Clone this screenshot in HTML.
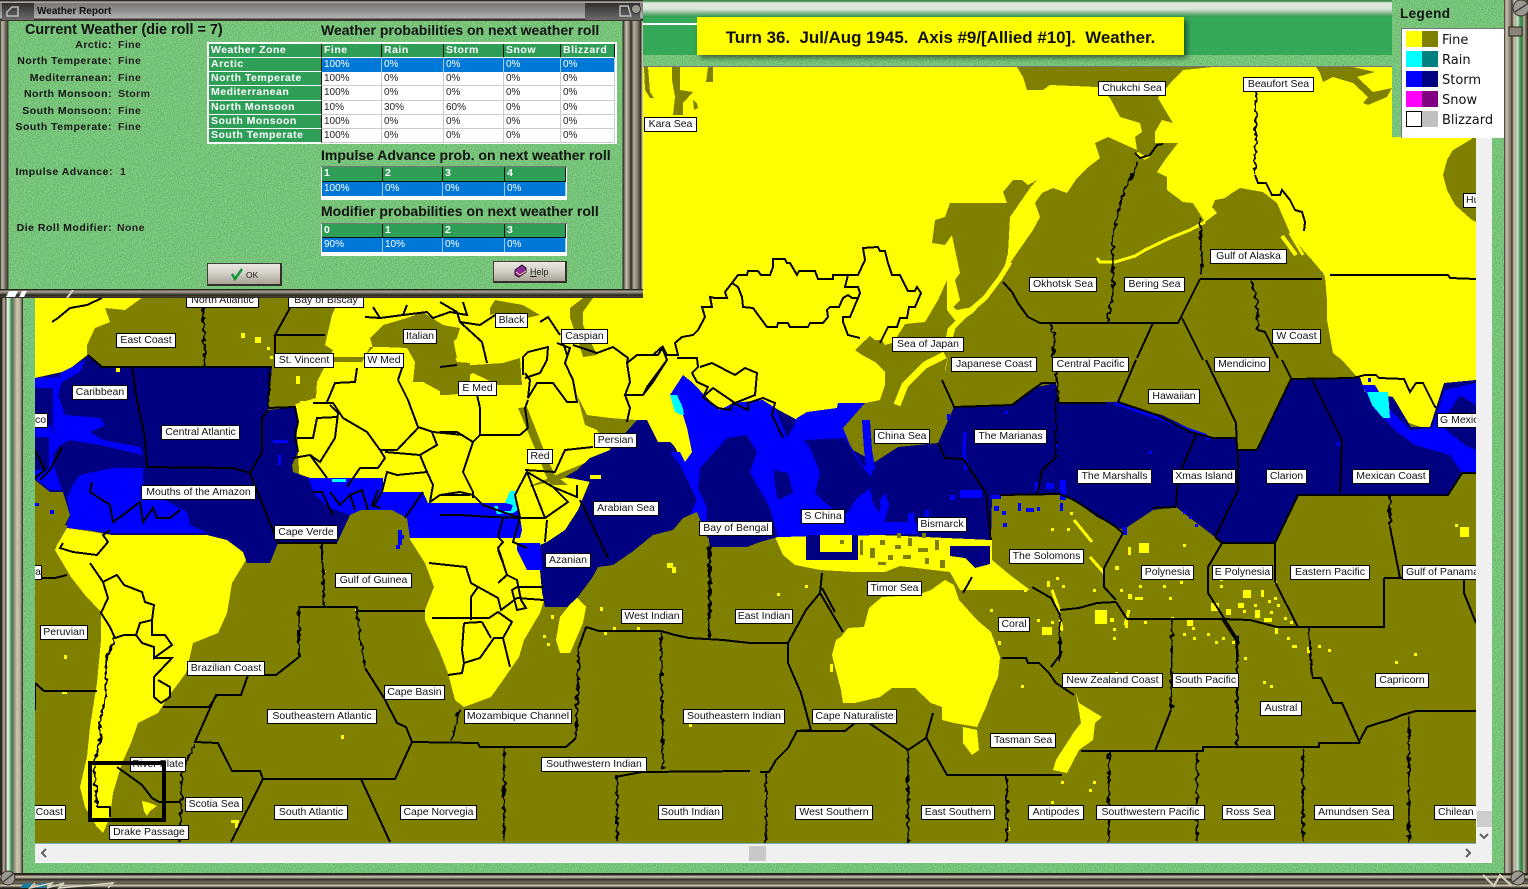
<!DOCTYPE html>
<html><head><meta charset="utf-8"><title>Weather Report</title>
<style>
html,body{margin:0;padding:0;width:1528px;height:889px;overflow:hidden;background:#82d084;font-family:"Liberation Sans",sans-serif}
#r{position:relative;width:1528px;height:889px;overflow:hidden;background:#82d084}
.a{position:absolute}
.l{position:absolute;height:15px;box-sizing:border-box;line-height:13px;background:#fff;border:1px solid #000;font-size:10.5px;text-align:center;overflow:hidden;white-space:nowrap;color:#111}
.t{position:absolute;white-space:nowrap;color:#141414;font-weight:bold}
.s{font-size:10.5px;letter-spacing:.5px;text-align:right;width:110px;left:2px}
.v{font-size:10.5px;letter-spacing:.4px;left:118px;color:#222}
.h{font-size:14px;color:#111}
.c{position:absolute;box-sizing:border-box;font-size:10px;line-height:13px;padding-left:2px;white-space:nowrap;color:#222;background:#fff;border-right:1px solid #ccc;border-bottom:1px solid #ccc}
.g{background:#2f9f57;color:#fff;font-weight:bold;font-size:10.5px;letter-spacing:.5px;border-right:1px solid #111;border-bottom:1px solid #fff}
.b{background:#0078d7;color:#fff;border-right:1px solid #9cc8ee;border-bottom:0}
.btn{position:absolute;box-sizing:border-box;background:linear-gradient(#ebe8e1,#d4d0c7 45%,#aaa497);border:1px solid #44413a;border-right:2px solid #332f2a;border-bottom:2px solid #332f2a;font-size:8.5px;color:#222}
</style></head><body><div id="r">

<svg class="a" style="left:0;top:0" width="1528" height="889"><defs><filter id="n" x="0" y="0" width="100%" height="100%" color-interpolation-filters="sRGB"><feTurbulence type="fractalNoise" baseFrequency=".85" numOctaves="2" seed="3"/><feColorMatrix values="0 0 0 0 .22  0 0 0 0 .5  0 0 0 0 .25  1 0 0 0 -.35"/></filter></defs><rect width="1528" height="889" filter="url(#n)"/></svg>

<!-- top strip -->
<div class="a" style="left:640px;top:0;width:760px;height:17px;background:linear-gradient(#3c8a4a 0,#3c8a4a 1px,#dfe9dd 3px,#dce7da 9px,#6fae7b 14px,#2f9a4d 17px)"></div>
<div class="a" style="left:640px;top:17px;width:760px;height:38px;background:#34aa58"></div>
<div class="a" style="left:640px;top:23px;width:60px;height:2px;background:#fff"></div>
<div class="a" style="left:640px;top:66px;width:760px;height:1px;background:#777"></div>

<!-- Map -->
<svg class="a" style="left:35px;top:67px" width="1441" height="776" viewBox="35 67 1441 776" shape-rendering="crispEdges">
<defs><filter id="j" filterUnits="userSpaceOnUse" x="35" y="67" width="1441" height="776" color-interpolation-filters="sRGB"><feTurbulence type="fractalNoise" baseFrequency=".22" numOctaves="1" seed="7" result="t"/><feDisplacementMap in="SourceGraphic" in2="t" scale="7" xChannelSelector="R" yChannelSelector="G"/></filter></defs>
<rect x="35" y="67" width="1441" height="776" fill="#808000"/>
<g fill="#ff0">
<polygon points="640,67 1476,67 1476,400 1430,430 1340,400 870,403 840,420 690,470 640,440 520,490 300,490 290,297"/>
<polygon points="300,470 530,470 530,510 300,510"/>
<polygon points="517,490 565,478 590,480 578,510 565,530 547,542 520,540"/>
<polygon points="35,297 143,297 125,310 105,308 110,322 95,328 87,345 87,355 72,367 62,372 35,378"/>
<!-- South America -->
<polygon points="57,545 67,528 112,535 207,535 227,540 243,552 246,560 232,583 227,613 218,633 193,643 186,673 168,697 158,713 138,723 131,743 122,763 113,793 110,817 103,833 97,827 85,807 80,787 87,757 90,727 97,683 101,640 101,612 85,595 71,577 55,550"/>
<!-- Africa south -->
<polygon points="409,538 550,538 552,540 545,560 544,600 540,613 524,640 519,657 503,680 491,697 464,707 455,700 448,673 439,650 425,620 425,610 434,587 425,563"/>
<!-- Madagascar -->
<polygon points="576,597 586,607 583,623 570,653 560,653 556,640 560,617"/>
<!-- Australia etc -->
<polygon points="841,637 848,628 864,627 869,608 882,597 917,595 931,590 945,580 954,585 959,600 977,620 991,632 1000,657 998,677 991,693 986,707 977,727 954,723 942,720 942,707 931,703 915,688 892,688 880,697 855,703 843,703 841,690 834,663 832,655 836,640"/>
<polygon points="963,727 977,730 979,750 972,755 963,743"/>
<polygon points="1076,692 1079,703 1102,717 1095,723 1093,740 1079,750 1067,773 1053,770 1056,760 1074,732 1081,723"/>
<!-- Indonesia -->
<polygon points="775,537 992,533 992,560 1010,575 1030,590 1000,590 985,590 960,590 950,572 900,566 885,572 855,572 820,570 795,565 783,555"/>
</g>

<g fill="#808000">
<!-- North Pacific -->
<polygon points="1017,67 1023,77 1027,90 1043,90 1050,85 1097,87 1110,98 1120,117 1140,123 1142,132 1135,137 1137,150 1108,137 1095,143 1100,158 1087,168 1077,178 1067,193 1053,188 1042,193 1035,203 1040,217 1033,230 1010,263 1003,273 993,290 973,313 957,323 950,347 945,373 952,410 1330,410 1358,378 1342,360 1333,353 1327,320 1327,300 1325,277 1323,273 1312,260 1303,250 1290,233 1277,203 1263,192 1240,188 1232,193 1225,198 1215,200 1212,207 1217,213 1205,222 1193,203 1183,202 1167,190 1167,177 1157,172 1165,160 1178,143 1155,143 1155,132 1162,120 1173,123 1158,98 1173,80 1183,70 1213,67"/>
<polygon points="950,203 1007,203 1003,192 1013,180 1022,180 1028,185 1037,180 1030,188 1017,207 1010,217 1008,253 1003,273 993,287 987,298 973,307 957,310 953,307 960,300 955,280 960,273 955,250 952,235 945,245 932,243 935,220 945,217"/>
<polygon points="1316,67 1353,67 1375,72 1357,77 1373,92 1392,88 1387,97 1368,105 1363,103 1368,97 1353,83 1333,77 1323,82 1320,73"/>
<polygon points="672,67 680,67 680,90 693,92 683,103 683,115 673,115 675,97 672,80"/>
<polygon points="708,67 713,67 713,82 706,82"/>
<polygon points="644,67 648,67 650,92 654,98 650,98 645,90"/>
<polygon points="693,100 697,103 698,108 694,110"/>
<!-- Alaska-ish top-right patch -->
<polygon points="1476,135 1470,140 1453,150 1447,160 1443,175 1447,190 1455,205 1472,220 1476,222"/>
<!-- China coast -->
<polygon points="947,280 938,300 925,322 905,324 895,340 892,343 885,345 882,340 875,340 870,336 860,345 855,350 862,355 875,362 885,372 885,385 880,400 865,403 855,415 843,428 850,445 863,467 873,458 890,450 915,440 945,415 954,405 945,370 950,347 950,330 957,323 947,310"/>
<!-- N Atlantic -->
<polygon points="143,297 367,297 340,297 332,315 325,345 333,350 317,382 316,398 293,405 272,410 270,367 100,367 88,355 87,345 95,328 110,322 105,308 125,310"/>
<!-- W Med -->
<polygon points="328,357 363,357 373,348 370,338 383,325 407,318 423,312 443,325 460,328 457,338 450,345 457,362 470,363 470,393 447,395 423,382 413,382 415,362 407,348 383,347 370,347 362,362 328,362"/>
<polygon points="440,368 473,365 503,363 520,358 522,385 498,385 473,373 457,382 447,395 440,395"/>
<polygon points="440,325 453,338 457,358 440,358"/>
<polygon points="490,308 495,300 523,305 540,315 527,318 497,313 490,315"/>
<polygon points="570,308 583,298 593,298 583,312 583,325 597,355 583,357 577,338 570,318"/>
<polygon points="518,408 527,407 547,458 555,475 568,485 550,485"/>
<polygon points="577,395 587,415 610,418 637,420 630,450 610,450 597,430 585,425"/>
<!-- Gulf of Guinea -->
<polygon points="350,515 363,512 378,510 392,508 407,518 410,540 425,563 434,587 425,610 425,640 300,640 246,560 278,543 337,543"/>
<!-- left ocean -->
<polygon points="35,478 50,492 63,492 70,515 65,523 60,532 57,545 55,550 71,577 85,595 35,620"/>
</g>

<g fill="none" stroke="#ff0">
<polyline stroke-width="3" points="1097,258 1100,262 1115,262 1135,256 1145,250 1170,238 1190,230 1205,222"/>
<polyline stroke-width="5" points="1010,262 1000,278 985,298 965,315 950,330 946,350"/>
<polyline stroke-width="7" points="945,355 925,365 905,385 897,405"/>
<polyline stroke-width="3" points="1290,233 1303,255"/>
<polyline stroke-width="4" points="1282,236 1296,255"/>
<polyline stroke-width="3" points="1137,153 1145,158 1150,155"/>
</g>

<!-- belt: navy -->
<polygon fill="#000080" points="35,378 62,372 72,367 88,355 100,367 272,367 268,410 295,407 298,422 295,435 298,452 292,465 293,472 310,478 350,478 350,515 337,543 278,543 270,563 247,563 243,552 227,540 207,535 112,535 65,525 70,515 63,492 50,492 35,480"/>
<polygon fill="#000080" points="540,570 540,545 547,542 565,530 578,510 590,482 565,477 577,470 590,458 610,450 637,420 647,420 658,442 672,442 685,465 707,470 727,438 747,435 775,408 875,462 898,447 938,443 954,407 1012,405 1037,387 1056,383 1058,403 1116,402 1134,408 1162,415 1199,433 1213,438 1236,438 1238,450 1257,450 1291,379 1360,377 1365,392 1393,397 1411,427 1430,427 1444,383 1476,380 1476,473 1462,473 1448,495 1298,495 1275,543 1222,543 1215,537 1176,507 1153,510 1123,530 1097,517 1074,500 1060,493 1000,495 992,497 991,540 880,535 778,537 760,542 747,547 710,547 707,528 703,513 697,512 683,518 673,530 653,535 632,552 613,565 598,567 592,578 577,598 567,607 545,607 542,592"/>

<!-- blue -->
<g fill="#00f">
<polygon points="308,478 383,478 383,492 423,492 428,503 518,503 522,530 520,538 410,538 407,518 392,510 361,510 350,515 330,508 315,495"/>
<polygon points="80,475 113,468 143,468 143,488 187,512 190,525 207,533 112,533 67,528 70,515 67,498 73,485"/>
<polygon points="35,378 60,377 62,372 72,367 85,360 80,372 62,382 58,395 65,415 100,418 105,425 90,432 103,440 140,447 143,455 100,445 70,440 60,445 53,455 55,470 62,490 50,490 35,478 35,425 50,425 55,435 50,415 45,395 35,388"/>
<polygon points="517,543 540,543 542,570 527,570 517,550"/>
<polygon points="683,375 693,383 707,398 720,410 733,403 763,400 775,408 787,438 793,428 797,418 807,412 837,408 838,403 865,403 843,428 850,445 863,467 873,458 872,500 882,520 882,535 778,537 707,537 697,512 690,515 697,500 680,465 670,452 692,452 687,428 683,415 670,395"/>
<rect x="882" y="522" width="36" height="12"/>
<polygon points="1362,385 1375,385 1390,410 1410,430 1432,428 1445,390 1476,383 1476,405 1460,395 1440,425 1465,445 1476,450 1476,473 1462,473 1450,455 1415,445 1395,430 1375,410"/>
<rect x="960" y="490" width="22" height="8"/><rect x="908" y="513" width="6" height="20"/><rect x="894" y="525" width="10" height="9"/>
<rect x="1035" y="482" width="4" height="10"/><rect x="1046" y="483" width="8" height="6"/><rect x="1060" y="480" width="6" height="20"/>
<rect x="991" y="495" width="10" height="4"/><rect x="994" y="506" width="5" height="5"/><rect x="1002" y="511" width="4" height="4"/><rect x="1018" y="503" width="3" height="8"/><rect x="1026" y="508" width="8" height="4"/><rect x="1037" y="507" width="3" height="4"/><rect x="1060" y="503" width="3" height="8"/><rect x="1003" y="523" width="4" height="4"/>
<rect x="1183" y="511" width="3" height="3"/><rect x="1189" y="516" width="3" height="3"/><rect x="1195" y="524" width="3" height="3"/><rect x="1123" y="527" width="4" height="8"/>
<rect x="1005" y="411" width="3" height="3"/><rect x="947" y="414" width="3" height="6"/><rect x="1055" y="443" width="3" height="4"/><rect x="1149" y="451" width="3" height="3"/>
<rect x="1368" y="378" width="3" height="4"/><rect x="1337" y="442" width="3" height="4"/><rect x="1388" y="495" width="3" height="3"/>
<rect x="950" y="495" width="5" height="5"/><rect x="925" y="510" width="4" height="8"/>
<rect x="273" y="440" width="15" height="3"/><rect x="278" y="455" width="3" height="10"/>
<rect x="398" y="530" width="4" height="15"/><rect x="396" y="545" width="4" height="4"/><rect x="400" y="535" width="4" height="4"/>
<rect x="35" y="503" width="4" height="3"/><rect x="50" y="510" width="4" height="4"/>
</g>
<g fill="none" stroke="#00f">
<polyline stroke-width="8" points="866,420 868,450 872,475 880,490 885,505 880,522"/>
<polyline stroke-width="3" points="965,432 964,450 966,470"/>
<polyline stroke-width="3" points="1115,403 1135,410 1165,420 1190,430 1205,435 1210,440"/>
<polyline stroke-width="3" points="753,470 748,490 760,510 775,525"/>
</g>
<!-- navy pockets -->
<g fill="#000080">
<polygon points="727,438 747,435 757,452 750,472 770,508 778,537 707,537 707,512 707,508 698,488 700,468"/>
<polygon points="804,440 845,438 859,463 871,477 871,487 855,500 848,513 838,513 822,500 815,493 820,473 811,450"/>
<polygon points="774,470 788,473 793,493 778,500 775,485"/>
<polygon points="872,470 885,470 895,480 880,500 870,492"/>
<polygon points="806,535 858,535 858,560 806,560"/>
<polygon points="950,546 990,546 990,564 975,568 965,558 950,556"/>
<rect x="35" y="388" width="18" height="35"/><rect x="35" y="437" width="14" height="33"/>
<polygon points="60,445 100,447 143,455 143,468 113,468 80,475 58,472"/>
<polygon points="72,385 100,392 125,412 100,415 75,410"/>
</g>
<rect x="820" y="535" width="32" height="17" fill="#ff0"/>
<polygon fill="#ff0" points="670,395 683,415 687,428 692,452 685,462 680,452 670,442 658,442 647,420 640,400"/>
<g fill="#808000">
<rect x="840" y="540" width="4" height="4"/><rect x="880" y="540" width="5" height="5"/><rect x="895" y="545" width="6" height="4"/><rect x="908" y="538" width="4" height="8"/><rect x="918" y="548" width="10" height="4"/><rect x="888" y="555" width="5" height="5"/><rect x="903" y="555" width="8" height="4"/><rect x="925" y="558" width="4" height="6"/><rect x="935" y="540" width="4" height="10"/><rect x="870" y="548" width="5" height="10"/><rect x="878" y="562" width="8" height="3"/><rect x="940" y="560" width="5" height="8"/><rect x="860" y="540" width="3" height="15"/>
<rect x="897" y="533" width="4" height="5"/><rect x="922" y="533" width="4" height="5"/>
</g>
<!-- cyan -->
<g fill="#0ff">
<rect x="332" y="479" width="14" height="3"/>
<polygon points="670,395 677,395 683,408 684,415 681,415 675,412"/>
<polygon points="1367,392 1388,392 1390,418 1383,418 1372,405"/>
<polygon points="510,491 516,491 518,510 513,513 497,514 494,506 498,506 498,511 511,511 513,505 505,503"/>
</g>
<rect x="590" y="475" width="11" height="4" fill="#ff0"/>

<!-- Yellow dots -->
<path fill="#ff0" d="M777 593h3v3h-3zM805 585h3v3h-3zM990 609h3v3h-3zM998 641h3v4h-3zM1021 685h3v3h-3zM830 664h3v8h-3zM1115 672h3v2h-3zM1093 781h3v3h-3zM1089 789h3v3h-3zM1051 801h3v3h-3zM1061 781h3v3h-3zM1007 827h3v4h-3zM1244 657h3v3h-3zM1263 681h3v3h-3zM1270 685h3v3h-3zM1414 653h3v3h-3zM1395 661h3v3h-3zM1328 649h3v3h-3zM1318 645h3v3h-3zM1292 645h5v3h-5zM1307 647h3v6h-3zM1287 637h3v3h-3zM1275 628h3v6h-3zM1113 628h3v3h-3zM1113 637h3v3h-3zM1093 589h3v3h-3zM1056 577h3v3h-3zM1062 585h3v3h-3zM1047 581h3v6h-3zM1024 589h3v3h-3zM1000 581h3v3h-3zM1128 594h4v5h-4zM1135 597h8v3h-8zM1169 597h3v3h-3zM1120 589h3v3h-3zM1139 585h3v3h-3zM1163 585h3v3h-3zM1180 581h3v3h-3zM1220 585h3v3h-3zM1274 581h3v3h-3zM1144 621h3v3h-3zM1171 617h3v3h-3zM1183 633h3v3h-3zM1193 637h3v3h-3zM1207 633h3v3h-3zM1215 641h3v3h-3zM1222 637h3v3h-3zM1232 641h3v3h-3zM1187 618h6v8h-6zM1192 627h3v3h-3zM1211 603h8v8h-8zM1226 609h5v6h-5zM1238 603h6v5h-6zM1243 590h8v8h-8zM1261 590h3v7h-3zM1268 600h3v3h-3zM1255 610h5v8h-5zM1264 618h8v4h-8zM1270 611h3v3h-3zM1284 617h3v3h-3zM1290 621h3v3h-3zM1274 597h3v3h-3zM1277 604h3v3h-3zM1254 604h3v3h-3zM1243 610h3v3h-3zM1095 610h12v14h-12zM1110 618h4v4h-4zM1125 618h3v10h-3zM1042 627h10v8h-10zM1060 625h3v6h-3zM1051 621h3v3h-3zM1037 619h3v3h-3zM1460 527h9v10h-9zM1455 524h3v3h-3zM1051 528h3v3h-3zM1067 528h3v3h-3zM1070 512h3v3h-3zM1183 544h3v3h-3zM1139 543h10v10h-10zM1128 547h3v8h-3zM1115 566h4v4h-4zM241 333h4v5h-4zM255 337h6v6h-6zM267 347h3v3h-3zM270 356h3v3h-3zM116 367h4v5h-4zM296 376h4v8h-4zM300 401h6v4h-6zM64 655h3v4h-3zM62 691h5v3h-5zM323 571h3v3h-3zM341 735h3v4h-3zM231 820h8v3h-8zM235 823h3v5h-3zM667 563h6v5h-6zM672 567h4v6h-4zM600 607h3v4h-3zM551 615h3v4h-3zM543 635h3v3h-3zM547 643h3v3h-3zM604 631h3v4h-3zM613 627h3v3h-3zM637 627h3v4h-3zM689 724h3v3h-3zM355 607h3v4h-3zM1220 578h3v3h-3z"/>
<polygon fill="#ff0" points="142,801 150,803 157,806 150,811 147,816 144,811"/>
<g fill="none" stroke="#ff0" stroke-width="3"><polyline points="1074,520 1092,542"/><polyline points="1090,557 1104,573"/><polyline points="1052,590 1060,612"/><polyline points="1060,620 1062,630"/><polyline points="1129,610 1125,625"/></g>

<!-- Jagged borders -->
<g fill="none" stroke="#000" stroke-width="2" filter="url(#j)">
<polyline points="1256,92 1255,175"/>
<polyline points="1138,162 1122,197 1118,213 1112,240 1113,267 1113,293 1107,322"/>
<polyline points="1200,218 1202,273"/>
<polyline points="1050,323 1055,340 1053,357"/>
<polyline points="1251,280 1257,300 1258,330"/>
<polyline points="1056,360 1058,403"/>
<polyline points="1056,403 1056,457"/>
<polyline points="1390,495 1390,527"/>
<polyline points="1060,615 1060,660"/>
<polyline points="908,750 908,842"/>
<polyline points="1007,775 1007,842"/>
<polyline points="1109,752 1109,842"/>
<polyline points="1197,752 1197,842"/>
<polyline points="1303,748 1303,842"/>
<polyline points="1409,715 1409,842"/>
<polyline points="766,772 766,842"/>
<polyline points="1171,710 1172,620"/>
<polyline points="1237,637 1237,747"/>
<polyline points="1309,627 1312,678"/>
<polyline points="324,607 322,543"/>
<polyline points="299,607 299,657"/>
<polyline points="195,743 182,773 180,842"/>
<polyline points="504,747 504,842"/>
<polyline points="617,775 617,842"/>
<polyline points="663,770 661,633"/>
<polyline points="709,638 709,547"/>
<polyline points="710,545 710,615"/>
<polyline points="203,298 205,367"/>
<polyline points="270,367 268,408"/>
<polyline points="356,607 365,668"/>
<polyline points="459,710 452,742"/>
<polyline points="579,647 576,738"/>
<polyline points="115,638 106,660 106,697 99,723 101,735 94,763 97,807"/>
</g>
<!-- Borders -->
<g fill="none" stroke="#000" stroke-width="2" stroke-linejoin="miter">
<polyline points="1255,175 1258,183 1266,183 1272,195 1280,195 1282,190 1290,200 1295,210 1302,212 1305,222 1304,231"/>
<polyline points="1330,275 1448,275 1450,278 1476,279"/>
<polyline points="1135,153 1140,158 1150,155 1157,145 1163,144"/>
<polyline points="1200,279 1322,279"/>
<polyline points="1200,279 1178,323 1040,323 1028,317 1018,303 1012,292 1003,282"/>
<polyline points="1153,323 1137,358"/>
<polyline points="1182,318 1203,360"/>
<polyline points="1258,330 1265,332 1278,358"/>
<polyline points="942,380 952,402 954,407 1012,405 1028,393 1042,383 1056,383"/>
<polyline points="1058,403 1106,403"/>
<polyline points="1136,360 1118,402 1157,415 1190,432 1213,438 1236,438"/>
<polyline points="1206,360 1236,423 1237,450 1257,450 1291,379 1353,378 1365,375 1376,375 1379,378 1404,379 1410,392 1416,383 1423,383 1434,405 1436,408"/>
<polyline points="1282,360 1291,378"/>
<polyline points="1312,380 1342,440 1340,493"/>
<polyline points="1238,450 1238,490 1215,537"/>
<polyline points="1196,435 1178,477 1176,507"/>
<polyline points="1056,457 1042,470 1037,495"/>
<polyline points="938,443 945,458 963,459 986,493 991,540"/>
<polyline points="1000,495 1060,494 1074,500 1116,527 1123,533 1104,568 1104,587 1116,600"/>
<polyline points="1153,508 1176,507"/>
<polyline points="1215,537 1222,543 1275,543 1298,495 1448,495 1462,473 1476,473"/>
<polyline points="1222,543 1208,567 1208,593 1224,618 1236,637 1238,657"/>
<polyline points="1275,543 1275,582 1298,627"/>
<polyline points="1390,527 1400,578"/>
<polyline points="1384,578 1476,578"/>
<polyline points="1384,578 1384,627 1277,627"/>
<polyline points="1464,580 1464,593 1476,623"/>
<polyline points="1116,602 1127,619 1222,619 1250,620 1277,627"/>
<polyline points="1060,610 1079,608 1097,603 1116,602"/>
<polyline points="1032,587 1051,598 1060,615"/>
<polyline points="972,577 963,593"/>
<polyline points="822,573 820,593 806,610 788,643 760,643"/>
<polyline points="820,593 843,632"/>
<polyline points="788,643 788,663 801,693 811,730 797,731 788,748 776,760 769,772 760,772"/>
<polyline points="797,731 845,731 855,723 869,723 894,740 908,750 926,738 933,713"/>
<polyline points="926,737 947,775 1062,775"/>
<polyline points="1002,658 1026,658 1028,663 1039,663 1049,673 1056,683 1074,695"/>
<polyline points="1060,637 1060,655 1051,667"/>
<polyline points="1081,751 1203,751 1203,747 1319,747 1319,743 1360,743"/>
<polyline points="1155,751 1171,710"/>
<polyline points="1360,743 1342,703 1333,703 1321,678 1312,678"/>
<polyline points="1360,740 1367,727 1379,723 1390,720 1402,715 1416,711 1476,711"/>
<polyline points="1222,619 1236,640"/>
<polyline points="35,578 55,578 67,575"/>
<polyline points="35,683 44,691 97,691"/>
<polyline points="35,683 35,710"/>
<polyline points="299,607 356,607 358,611 425,611"/>
<polyline points="299,657 276,675 248,675 241,695 216,695 195,742 218,743 232,771 260,771 263,779 395,779 412,742 478,743 480,747 566,747 576,738"/>
<polyline points="579,647 586,627"/>
<polyline points="217,695 209,707 163,707"/>
<polyline points="365,668 384,698 397,723 406,727 412,742"/>
<polyline points="263,779 231,842"/>
<polyline points="361,779 390,842"/>
<polyline points="615,777 642,772 750,771"/>
<polyline points="159,802 180,802"/>
<polyline points="580,500 608,558"/>
<polyline points="822,588 835,612"/>
<polyline points="586,627 599,631 661,631 675,635 689,638 723,640 750,643 760,643"/>
<polyline points="88,355 102,367 272,367"/>
<polyline points="290,308 275,335 325,335"/>
<polyline points="275,335 275,358"/>
<polyline points="268,408 295,407 298,422 295,435 298,452"/>
<polyline points="132,368 137,400 145,438 147,467 233,468 250,473 262,452 262,418 268,410"/>
<polyline points="250,473 278,543 337,543"/>
<polyline points="322,543 322,560"/>
<polyline points="52,322 58,318 70,308 87,305 102,298"/>
<polyline points="398,380 408,400 418,427 433,432 463,435"/>
<polyline points="398,380 403,365"/>
<polyline points="313,403 333,403 343,418 367,432 380,450 397,450 418,428"/>
<polyline points="330,405 338,413 335,438 320,462 310,455 293,458"/>
<polyline points="297,438 313,438 317,418 337,417"/>
<polyline points="310,455 327,478"/>
<polyline points="380,450 385,458 378,468 360,468 347,487"/>
<polyline points="385,452 420,455 437,445 432,432"/>
<polyline points="420,455 427,472 397,475 387,472 382,492 373,507"/>
<polyline points="427,472 433,485 430,502 440,495 470,495"/>
<polyline points="405,518 423,492"/>
<polyline points="313,492 322,492 333,515"/>
<polyline points="330,492 340,505 350,495 355,510"/>
<polyline points="350,495 362,490 368,510"/>
<polyline points="378,490 372,505 380,508"/>
<polyline points="357,368 355,382 335,383 327,402"/>
<polyline points="440,367 457,365"/>
<polyline points="365,317 380,318 373,307"/>
<polyline points="380,318 403,315 407,305"/>
<polyline points="403,315 427,312 433,318 450,312 467,315 463,302"/>
<polyline points="440,302 457,312 460,322 480,325 495,315"/>
<polyline points="460,322 482,342 487,363"/>
<polyline points="477,395 480,408 480,435 473,442 463,472 473,492 473,498"/>
<polyline points="440,432 457,432 473,442"/>
<polyline points="480,435 520,435 528,428"/>
<polyline points="528,400 525,408 528,428"/>
<polyline points="525,373 530,380 528,398 537,383 553,383 567,402 577,402 573,380 565,363 570,348 557,343"/>
<polyline points="523,375 523,357 528,352 548,347 547,360 540,373 525,378"/>
<polyline points="560,335 548,317 540,322"/>
<polyline points="563,342 567,355"/>
<polyline points="573,345 597,353 613,347 628,358 627,363 630,382 625,395 643,395 653,382 667,360 662,347 653,355 637,355 627,363"/>
<polyline points="625,395 630,408 627,422"/>
<polyline points="677,358 697,358 698,367 692,373 697,382 708,387 703,397 718,408 730,410 733,403 748,410 748,403 763,398 775,403 772,415 783,438"/>
<polyline points="667,360 647,387 643,395"/>
<polyline points="700,367 712,363 735,375 745,368 757,373 755,395 735,403 713,388 703,397"/>
<polyline points="640,355 658,355 663,347 667,355 678,355 675,343 682,337 693,335 698,330 705,317 702,307 712,307 710,297 715,298 727,298 725,292 732,283 738,287 742,297 743,307 753,308 767,327 777,327 778,323 788,323 790,327 808,327 810,323 823,323 828,317 827,310 830,307 839,307 843,298 848,295 852,298 858,298 860,293 858,287 845,287 848,275"/>
<polyline points="732,283 738,275 747,275 748,271 758,271 761,275 770,275 773,267 773,259 785,259 787,263 790,263 797,275 799,271 815,271 818,279 833,279 833,275 858,275 865,260 863,248 878,247 880,251 885,251 888,263 892,275 900,275 908,291 915,291 917,287 921,293 915,307 909,307 907,318 900,318 897,327 888,327 880,343"/>
<polyline points="858,298 850,317 843,317 843,322 848,335 860,338"/>
<polyline points="63,543 60,548 73,552 97,555 108,542 103,535 110,530"/>
<polyline points="92,482 90,492 110,505 113,522 123,515 140,502 143,522 153,508 157,518 170,518 180,510"/>
<polyline points="90,563 103,582 117,575 124,585 142,592 145,602 154,605 152,620 140,623 136,635 142,643 154,647 154,658 172,645 165,635 152,635 152,620"/>
<polyline points="103,582 108,598 101,613 110,627 115,638 124,635 136,635"/>
<polyline points="97,807 110,807 110,817"/>
<polyline points="154,658 172,658 154,677 154,697 161,703 170,697 170,687 158,680"/>
<polyline points="117,767 142,785 152,798 159,802"/>
<polyline points="432,618 489,618 498,612 512,622 503,638 494,638 480,658 464,663 462,673 448,675"/>
<polyline points="482,622 491,638"/>
<polyline points="464,623 482,622"/>
<polyline points="464,623 462,650 464,663"/>
<polyline points="503,638 510,667"/>
<polyline points="429,563 466,567 471,583 498,598 501,610 517,598 544,600"/>
<polyline points="498,583 507,575 517,580 521,600 526,608 517,610 512,590 517,587 544,587"/>
<polyline points="471,583 478,587 471,597 471,620"/>
<polyline points="498,550 503,563 507,575"/>
<polyline points="520,518 545,518 527,472 515,495 520,517"/>
<polyline points="545,518 568,502 553,487 527,472"/>
<polyline points="553,487 577,497 577,485"/>
<polyline points="525,470 555,472 565,450 593,447"/>
<polyline points="440,495 460,492 473,495 483,505 520,518"/>
<polyline points="440,515 460,515 493,517 520,518"/>
<polyline points="503,518 498,537 503,542 498,548 503,562"/>
<polyline points="520,518 513,542 527,548"/>
<polyline points="547,520 545,542"/>
<polyline points="35,450 45,470 35,478"/>
<polyline points="62,447 50,470 40,480"/>
</g>
</svg>

<!-- Labels -->
<div class="l" style="left:1098px;top:81px;width:68px">Chukchi Sea</div>
<div class="l" style="left:1243px;top:77px;width:71px">Beaufort Sea</div>
<div class="l" style="left:644px;top:117px;width:53px">Kara Sea</div>
<div class="l" style="left:1463px;top:193px;width:13px;border-right:0;text-align:left;padding-left:2px">Hu</div>
<div class="l" style="left:1210px;top:249px;width:77px">Gulf of Alaska</div>
<div class="l" style="left:1029px;top:277px;width:68px">Okhotsk Sea</div>
<div class="l" style="left:1124px;top:277px;width:61px">Bering Sea</div>
<div class="l" style="left:186px;top:293px;width:73px">North Atlantic</div>
<div class="l" style="left:288px;top:293px;width:76px">Bay of Biscay</div>
<div class="l" style="left:116px;top:333px;width:60px">East Coast</div>
<div class="l" style="left:495px;top:313px;width:33px">Black</div>
<div class="l" style="left:403px;top:329px;width:34px">Italian</div>
<div class="l" style="left:561px;top:329px;width:47px">Caspian</div>
<div class="l" style="left:892px;top:337px;width:72px">Sea of Japan</div>
<div class="l" style="left:1272px;top:329px;width:49px">W Coast</div>
<div class="l" style="left:951px;top:357px;width:86px">Japanese Coast</div>
<div class="l" style="left:1052px;top:357px;width:77px">Central Pacific</div>
<div class="l" style="left:1214px;top:357px;width:56px">Mendicino</div>
<div class="l" style="left:274px;top:353px;width:60px">St. Vincent</div>
<div class="l" style="left:364px;top:353px;width:40px">W Med</div>
<div class="l" style="left:72px;top:385px;width:56px">Caribbean</div>
<div class="l" style="left:458px;top:381px;width:39px">E Med</div>
<div class="l" style="left:1148px;top:389px;width:52px">Hawaiian</div>
<div class="l" style="left:161px;top:425px;width:79px">Central Atlantic</div>
<div class="l" style="left:35px;top:413px;width:13px;border-left:0;text-align:right;padding-right:2px">co</div>
<div class="l" style="left:594px;top:433px;width:43px">Persian</div>
<div class="l" style="left:874px;top:429px;width:56px">China Sea</div>
<div class="l" style="left:974px;top:429px;width:73px">The Marianas</div>
<div class="l" style="left:1437px;top:413px;width:39px;border-right:0;text-align:left;padding-left:2px">G Mexico</div>
<div class="l" style="left:527px;top:449px;width:26px">Red</div>
<div class="l" style="left:141px;top:485px;width:115px">Mouths of the Amazon</div>
<div class="l" style="left:1077px;top:469px;width:75px">The Marshalls</div>
<div class="l" style="left:1172px;top:469px;width:64px">Xmas Island</div>
<div class="l" style="left:1266px;top:469px;width:41px">Clarion</div>
<div class="l" style="left:1352px;top:469px;width:78px">Mexican Coast</div>
<div class="l" style="left:593px;top:501px;width:66px">Arabian Sea</div>
<div class="l" style="left:801px;top:509px;width:44px">S China</div>
<div class="l" style="left:917px;top:517px;width:50px">Bismarck</div>
<div class="l" style="left:699px;top:521px;width:74px">Bay of Bengal</div>
<div class="l" style="left:274px;top:525px;width:64px">Cape Verde</div>
<div class="l" style="left:545px;top:553px;width:46px">Azanian</div>
<div class="l" style="left:1009px;top:549px;width:75px">The Solomons</div>
<div class="l" style="left:35px;top:565px;width:7px;border-left:0;text-align:right">a</div>
<div class="l" style="left:1141px;top:565px;width:53px">Polynesia</div>
<div class="l" style="left:1212px;top:565px;width:61px">E Polynesia</div>
<div class="l" style="left:1290px;top:565px;width:80px">Eastern Pacific</div>
<div class="l" style="left:1402px;top:565px;width:74px;border-right:0;text-align:left;padding-left:3px">Gulf of Panama</div>
<div class="l" style="left:335px;top:573px;width:77px">Gulf of Guinea</div>
<div class="l" style="left:867px;top:581px;width:55px">Timor Sea</div>
<div class="l" style="left:621px;top:609px;width:62px">West Indian</div>
<div class="l" style="left:735px;top:609px;width:58px">East Indian</div>
<div class="l" style="left:998px;top:617px;width:32px">Coral</div>
<div class="l" style="left:40px;top:625px;width:48px">Peruvian</div>
<div class="l" style="left:187px;top:661px;width:78px">Brazilian Coast</div>
<div class="l" style="left:1062px;top:673px;width:101px">New Zealand Coast</div>
<div class="l" style="left:1172px;top:673px;width:67px">South Pacific</div>
<div class="l" style="left:1375px;top:673px;width:54px">Capricorn</div>
<div class="l" style="left:384px;top:685px;width:61px">Cape Basin</div>
<div class="l" style="left:1260px;top:701px;width:42px">Austral</div>
<div class="l" style="left:267px;top:709px;width:110px">Southeastern Atlantic</div>
<div class="l" style="left:464px;top:709px;width:108px">Mozambique Channel</div>
<div class="l" style="left:683px;top:709px;width:102px">Southeastern Indian</div>
<div class="l" style="left:812px;top:709px;width:85px">Cape Naturaliste</div>
<div class="l" style="left:990px;top:733px;width:66px">Tasman Sea</div>
<div class="l" style="left:130px;top:757px;width:56px">River Plate</div>
<div class="l" style="left:541px;top:757px;width:106px">Southwestern Indian</div>
<div class="l" style="left:185px;top:797px;width:58px">Scotia Sea</div>
<div class="l" style="left:35px;top:805px;width:31px;border-left:0;text-align:right;padding-right:2px">Coast</div>
<div class="l" style="left:274px;top:805px;width:74px">South Atlantic</div>
<div class="l" style="left:400px;top:805px;width:77px">Cape Norvegia</div>
<div class="l" style="left:658px;top:805px;width:65px">South Indian</div>
<div class="l" style="left:795px;top:805px;width:78px">West Southern</div>
<div class="l" style="left:921px;top:805px;width:74px">East Southern</div>
<div class="l" style="left:1028px;top:805px;width:56px">Antipodes</div>
<div class="l" style="left:1096px;top:805px;width:109px">Southwestern Pacific</div>
<div class="l" style="left:1222px;top:805px;width:53px">Ross Sea</div>
<div class="l" style="left:1314px;top:805px;width:80px">Amundsen Sea</div>
<div class="l" style="left:1434px;top:805px;width:42px;border-right:0;text-align:left;padding-left:3px">Chilean</div>
<div class="l" style="left:109px;top:825px;width:80px">Drake Passage</div>
<svg class="a" style="left:88px;top:761px" width="78" height="61" shape-rendering="crispEdges"><rect x="2" y="2" width="74" height="57" fill="none" stroke="#000" stroke-width="4"/></svg>

<!-- Scrollbars -->
<div class="a" style="left:35px;top:843px;width:1457px;height:20px;background:#f0f0f0;border-bottom:1px solid #fff;border-top:1px solid #7ab0c0;box-sizing:border-box"></div>
<div class="a" style="left:1476px;top:137px;width:16px;height:726px;background:#f0f0f0"></div>
<div class="a" style="left:749px;top:846px;width:17px;height:15px;background:#c8c8c8"></div>
<div class="a" style="left:1477px;top:811px;width:15px;height:16px;background:#cdcdcd"></div>
<svg class="a" style="left:35px;top:843px" width="1457" height="20"><polyline points="11,6 7,10 11,14" fill="none" stroke="#606060" stroke-width="2"/><polyline points="1431,6 1435,10 1431,14" fill="none" stroke="#606060" stroke-width="2"/></svg>
<svg class="a" style="left:1476px;top:830px" width="16" height="12"><polyline points="4,4 8,8 12,4" fill="none" stroke="#606060" stroke-width="2"/></svg>

<!-- Frame -->
<div class="a" style="left:0;top:298px;width:23px;height:591px;background:linear-gradient(90deg,#2a2620 0,#2a2620 2px,#b5ac98 3px,#8f8876 5px,#3a362e 6px,#dfeee0 7px,#cfe6d0 9px,#4a9a5a 11px,#3f7f4a 12px,#8a8578 14px,#cfc7b4 17px,#b9b09c 20px,#5d574a 22px,#2a2620 23px)"></div>
<div class="a" style="left:1504px;top:0;width:24px;height:889px;background:linear-gradient(90deg,#2a2620 0,#c9c1ae 2px,#8f8876 6px,#3a362e 8px,#cfc7b4 10px,#a8a08c 12px,#dfeee0 13px,#4a9a5a 16px,#2f7f44 18px,#b9b09c 20px,#6b6557 22px,#2a2620 24px)"></div>
<div class="a" style="left:0;top:873px;width:1528px;height:16px;background:linear-gradient(#2a2620 0,#2a2620 2px,#c4bba7 3px,#a89f8b 5px,#2e2a24 6px,#6f6a5c 9px,#514c40 11px,#cfc7b4 12px,#b5ac98 13px,#1f1c17 15px)"></div>
<svg class="a" style="left:0;top:866px" width="120" height="23"><polygon points="24,17 33,17 29,22 20,22" fill="#1e7a98"/><polygon points="40,17 49,17 45,22 36,22" fill="#1e7a98"/><polyline points="35,17 30,22 52,17 47,22 64,17 59,22 113,17 108,22" stroke="#d8d2c0" stroke-width="1.5" fill="none"/><circle cx="8" cy="12" r="7" fill="#9a9a92" stroke="#3a362e"/><line x1="3" y1="16" x2="13" y2="8" stroke="#444" stroke-width="1.5"/></svg>
<svg class="a" style="left:1450px;top:866px" width="78" height="23"><polyline points="33,9 44,20 50,9 62,20" stroke="#d8d2c0" stroke-width="2" fill="none"/><circle cx="68" cy="12" r="7" fill="#9a9a92" stroke="#3a362e"/><line x1="63" y1="16" x2="73" y2="8" stroke="#444" stroke-width="1.5"/></svg>

<!-- Banner -->
<div class="a" style="left:697px;top:17px;width:487px;height:38px;background:#ff0;box-shadow:3px 3px 5px rgba(0,0,0,.5);line-height:41px;text-align:center;font-weight:bold;font-size:16.9px;color:#111;white-space:pre">Turn 36.  Jul/Aug 1945.  Axis #9/[Allied #10].  Weather.</div>

<!-- Legend -->
<div class="a" style="left:1392px;top:0;width:112px;height:137px;background:#82d084"></div>
<svg class="a" style="left:1392px;top:0" width="112" height="137"><rect width="112" height="137" filter="url(#n)"/></svg>
<div class="t" style="left:1400px;top:6px;font-size:13.5px;letter-spacing:.4px;color:#111">Legend</div>
<div class="a" style="left:1401px;top:28px;width:103px;height:110px;box-sizing:border-box;background:#fff;border-top:1px solid #777;border-left:1px solid #777"></div>
<div class="a" style="left:1406px;top:31px;width:16px;height:16px;background:#ff0"></div><div class="a" style="left:1422px;top:31px;width:16px;height:16px;background:#808000"></div>
<div class="a" style="left:1406px;top:51px;width:16px;height:16px;background:#0ff"></div><div class="a" style="left:1422px;top:51px;width:16px;height:16px;background:#008080"></div>
<div class="a" style="left:1406px;top:71px;width:16px;height:16px;background:#00f"></div><div class="a" style="left:1422px;top:71px;width:16px;height:16px;background:#000080"></div>
<div class="a" style="left:1406px;top:91px;width:16px;height:16px;background:#f0f"></div><div class="a" style="left:1422px;top:91px;width:16px;height:16px;background:#800080"></div>
<div class="a" style="left:1406px;top:111px;width:16px;height:16px;box-sizing:border-box;background:#fff;border:1px solid #000"></div><div class="a" style="left:1422px;top:111px;width:16px;height:16px;background:#c0c0c0"></div>
<div class="a" style="left:1442px;top:33px;font:13px 'DejaVu Sans',sans-serif;color:#111">Fine</div>
<div class="a" style="left:1442px;top:53px;font:13px 'DejaVu Sans',sans-serif;color:#111">Rain</div>
<div class="a" style="left:1442px;top:73px;font:13px 'DejaVu Sans',sans-serif;color:#111">Storm</div>
<div class="a" style="left:1442px;top:93px;font:13px 'DejaVu Sans',sans-serif;color:#111">Snow</div>
<div class="a" style="left:1442px;top:113px;font:13px 'DejaVu Sans',sans-serif;color:#111">Blizzard</div>
<svg class="a" style="left:1504px;top:0" width="24" height="40"><circle cx="17" cy="8" r="8" fill="#9a9a92" stroke="#3a362e"/><line x1="11" y1="12" x2="23" y2="4" stroke="#444" stroke-width="1.5"/><rect x="5" y="27" width="13" height="9" fill="#8a8578" stroke="#222"/></svg>

<!-- Dialog -->
<div class="a" style="left:0;top:0;width:643px;height:298px;background:linear-gradient(90deg,#2a2620 0,#c9c1ae 2px,#7a7568 5px,#3a362e 8px,#82d084 9px,#82d084 622px,#2a2620 623px,#c9c1ae 626px,#8f8876 629px,#2a2620 631px,#b9b09c 634px,#7a7568 638px,#2a2620 641px,#c9c1ae 642px)"></div>
<svg class="a" style="left:9px;top:21px" width="613" height="268"><rect width="613" height="268" filter="url(#n)"/></svg>
<div class="a" style="left:0;top:0;width:643px;height:21px;background:linear-gradient(#2d2a25 0,#2d2a25 1px,#d6d3c9 2px,#7c7c7c 3px,#8b8b8b 10px,#b0b0b0 18px,#3a362e 19px,#3a362e 21px)"></div>
<div class="a" style="left:2px;top:3px;width:32px;height:17px;background:linear-gradient(#2f2f2f,#6c6c6c)"></div>
<div class="a" style="left:585px;top:3px;width:55px;height:17px;background:linear-gradient(#2f2f2f,#6c6c6c)"></div>
<svg class="a" style="left:6px;top:6px" width="14" height="11"><polygon points="1,6 6,1 12,1 12,10 1,10" fill="none" stroke="#bbb" stroke-width="1.5"/></svg>
<svg class="a" style="left:618px;top:4px" width="24" height="15"><polygon points="2,2 10,2 13,12 2,12" fill="none" stroke="#bbb" stroke-width="1.5"/><circle cx="18" cy="5" r="4.5" fill="#9a9a92" stroke="#3a362e"/></svg>
<div class="t" style="left:37px;top:6px;font-size:10px;color:#111">Weather Report</div>
<div class="a" style="left:0;top:289px;width:643px;height:9px;background:linear-gradient(#2a2620 0,#2a2620 1px,#b5ac98 2px,#7a7568 4px,#2a2620 6px,#4a463c 8px,#1e1c18 9px)"></div>
<svg class="a" style="left:5px;top:290px" width="70" height="8"><polygon points="4,1 13,1 10,7 1,7" fill="#fff"/><polygon points="17,1 22,1 19,7 14,7" fill="#fff"/><line x1="68" y1="0" x2="62" y2="8" stroke="#d8d2c0" stroke-width="2"/></svg>

<div class="t h" style="left:25px;top:22px;font-size:14.4px">Current Weather (die roll = 7)</div>
<div class="t h" style="left:321px;top:22px">Weather probabilities on next weather roll</div>
<div class="t h" style="left:321px;top:147px">Impulse Advance prob. on next weather roll</div>
<div class="t h" style="left:321px;top:203px">Modifier probabilities on next weather roll</div>

<div class="t s" style="top:39px">Arctic:</div><div class="t v" style="top:39px">Fine</div>
<div class="t s" style="top:55px">North Temperate:</div><div class="t v" style="top:55px">Fine</div>
<div class="t s" style="top:72px">Mediterranean:</div><div class="t v" style="top:72px">Fine</div>
<div class="t s" style="top:88px">North Monsoon:</div><div class="t v" style="top:88px">Storm</div>
<div class="t s" style="top:105px">South Monsoon:</div><div class="t v" style="top:105px">Fine</div>
<div class="t s" style="top:121px">South Temperate:</div><div class="t v" style="top:121px">Fine</div>
<div class="t s" style="top:166px;left:3px">Impulse Advance:</div><div class="t v" style="top:166px;left:120px">1</div>
<div class="t s" style="top:222px">Die Roll Modifier:</div><div class="t v" style="top:222px;left:117px">None</div>

<!-- Table 1 -->
<div class="a" style="left:207px;top:42px;width:410px;height:102px;background:#fff"></div>
<div class="c g" style="left:209px;top:44px;width:113px;height:14px">Weather Zone</div><div class="c g" style="left:322px;top:44px;width:60px;height:14px">Fine</div><div class="c g" style="left:382px;top:44px;width:62px;height:14px">Rain</div><div class="c g" style="left:444px;top:44px;width:60px;height:14px">Storm</div><div class="c g" style="left:504px;top:44px;width:57px;height:14px">Snow</div><div class="c g" style="left:561px;top:44px;width:54px;height:14px">Blizzard</div>
<div class="c g" style="left:209px;top:58px;width:113px;height:14px">Arctic</div><div class="c b" style="left:322px;top:58px;width:60px;height:14px">100%</div><div class="c b" style="left:382px;top:58px;width:62px;height:14px">0%</div><div class="c b" style="left:444px;top:58px;width:60px;height:14px">0%</div><div class="c b" style="left:504px;top:58px;width:57px;height:14px">0%</div><div class="c b" style="left:561px;top:58px;width:54px;height:14px">0%</div>
<div class="c g" style="left:209px;top:72px;width:113px;height:14px">North Temperate</div><div class="c" style="left:322px;top:72px;width:60px;height:14px">100%</div><div class="c" style="left:382px;top:72px;width:62px;height:14px">0%</div><div class="c" style="left:444px;top:72px;width:60px;height:14px">0%</div><div class="c" style="left:504px;top:72px;width:57px;height:14px">0%</div><div class="c" style="left:561px;top:72px;width:54px;height:14px">0%</div>
<div class="c g" style="left:209px;top:86px;width:113px;height:15px">Mediterranean</div><div class="c" style="left:322px;top:86px;width:60px;height:15px">100%</div><div class="c" style="left:382px;top:86px;width:62px;height:15px">0%</div><div class="c" style="left:444px;top:86px;width:60px;height:15px">0%</div><div class="c" style="left:504px;top:86px;width:57px;height:15px">0%</div><div class="c" style="left:561px;top:86px;width:54px;height:15px">0%</div>
<div class="c g" style="left:209px;top:101px;width:113px;height:14px">North Monsoon</div><div class="c" style="left:322px;top:101px;width:60px;height:14px">10%</div><div class="c" style="left:382px;top:101px;width:62px;height:14px">30%</div><div class="c" style="left:444px;top:101px;width:60px;height:14px">60%</div><div class="c" style="left:504px;top:101px;width:57px;height:14px">0%</div><div class="c" style="left:561px;top:101px;width:54px;height:14px">0%</div>
<div class="c g" style="left:209px;top:115px;width:113px;height:14px">South Monsoon</div><div class="c" style="left:322px;top:115px;width:60px;height:14px">100%</div><div class="c" style="left:382px;top:115px;width:62px;height:14px">0%</div><div class="c" style="left:444px;top:115px;width:60px;height:14px">0%</div><div class="c" style="left:504px;top:115px;width:57px;height:14px">0%</div><div class="c" style="left:561px;top:115px;width:54px;height:14px">0%</div>
<div class="c g" style="left:209px;top:129px;width:113px;height:14px">South Temperate</div><div class="c" style="left:322px;top:129px;width:60px;height:14px">100%</div><div class="c" style="left:382px;top:129px;width:62px;height:14px">0%</div><div class="c" style="left:444px;top:129px;width:60px;height:14px">0%</div><div class="c" style="left:504px;top:129px;width:57px;height:14px">0%</div><div class="c" style="left:561px;top:129px;width:54px;height:14px">0%</div>

<!-- Table 2 -->
<div class="a" style="left:321px;top:166px;width:246px;height:34px;background:#fff;border-top:1px solid #777;box-sizing:border-box"></div>
<div class="c g" style="left:322px;top:167px;width:61px;height:15px;border-bottom-color:#111">1</div><div class="c g" style="left:383px;top:167px;width:60px;height:15px;border-bottom-color:#111">2</div><div class="c g" style="left:443px;top:167px;width:62px;height:15px;border-bottom-color:#111">3</div><div class="c g" style="left:505px;top:167px;width:61px;height:15px;border-bottom-color:#111">4</div>
<div class="c b" style="left:322px;top:182px;width:61px;height:14px">100%</div><div class="c b" style="left:383px;top:182px;width:60px;height:14px">0%</div><div class="c b" style="left:443px;top:182px;width:62px;height:14px">0%</div><div class="c b" style="left:505px;top:182px;width:61px;height:14px">0%</div>

<!-- Table 3 -->
<div class="a" style="left:321px;top:223px;width:246px;height:33px;background:#fff;border-top:1px solid #777;box-sizing:border-box"></div>
<div class="c g" style="left:322px;top:224px;width:61px;height:14px;border-bottom-color:#111">0</div><div class="c g" style="left:383px;top:224px;width:60px;height:14px;border-bottom-color:#111">1</div><div class="c g" style="left:443px;top:224px;width:62px;height:14px;border-bottom-color:#111">2</div><div class="c g" style="left:505px;top:224px;width:61px;height:14px;border-bottom-color:#111">3</div>
<div class="c b" style="left:322px;top:238px;width:61px;height:14px">90%</div><div class="c b" style="left:383px;top:238px;width:60px;height:14px">10%</div><div class="c b" style="left:443px;top:238px;width:62px;height:14px">0%</div><div class="c b" style="left:505px;top:238px;width:61px;height:14px">0%</div>

<!-- Buttons -->
<div class="btn" style="left:207px;top:263px;width:75px;height:23px"></div>
<svg class="a" style="left:230px;top:267px" width="14" height="14"><polyline points="2,7 5,12 12,2" fill="none" stroke="#0a9a3a" stroke-width="2.5"/></svg>
<div class="a" style="left:246px;top:270px;font-size:8.5px;color:#222">OK</div>
<div class="btn" style="left:493px;top:261px;width:74px;height:22px"></div>
<svg class="a" style="left:513px;top:264px" width="15" height="15"><polygon points="2,6 9,1 13,4 13,8 6,13 2,11" fill="#8a2a96" stroke="#2a1030"/><polyline points="3,8 7,11 13,7" fill="none" stroke="#f3d7a0"/></svg>
<div class="a" style="left:530px;top:267px;font-size:9px;color:#222"><u>H</u>elp</div>

</div></body></html>
